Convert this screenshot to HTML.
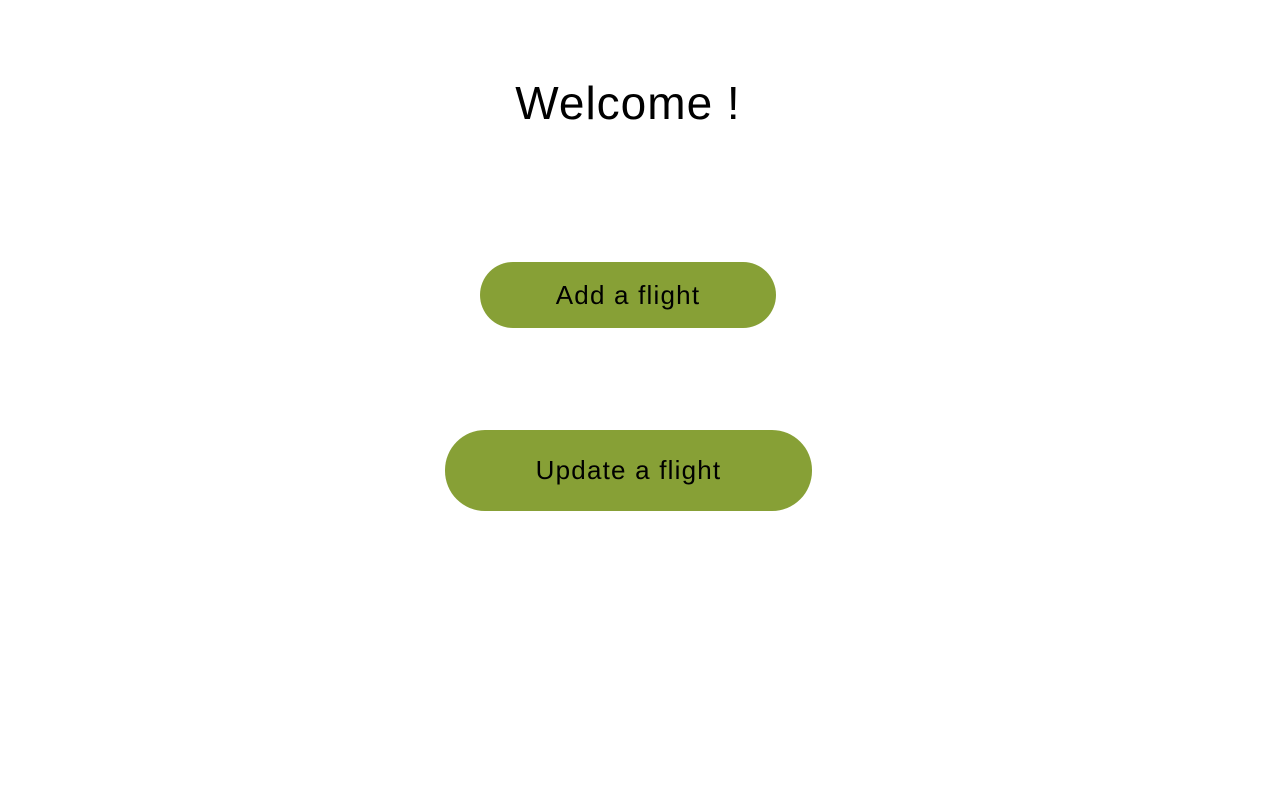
<!DOCTYPE html>
<html><head><style>
body{margin:0;width:1280px;height:800px;background:#fff;font-family:"Liberation Sans",sans-serif;position:relative}
h1{position:absolute;top:76px;left:0;width:1256px;text-align:center;margin:0;font-weight:400;font-size:46px;line-height:54px;color:#000;letter-spacing:1px}
.b{position:absolute;background:#87a036;color:#000;display:flex;align-items:center;justify-content:center;font-size:26px;letter-spacing:1.2px}
</style></head><body>
<h1>Welcome !</h1>
<div class="b" style="left:480px;top:262px;width:296px;height:66px;border-radius:33px">Add a flight</div>
<div class="b" style="left:445px;top:430px;width:367px;height:81px;border-radius:40px">Update a flight</div>
</body></html>
